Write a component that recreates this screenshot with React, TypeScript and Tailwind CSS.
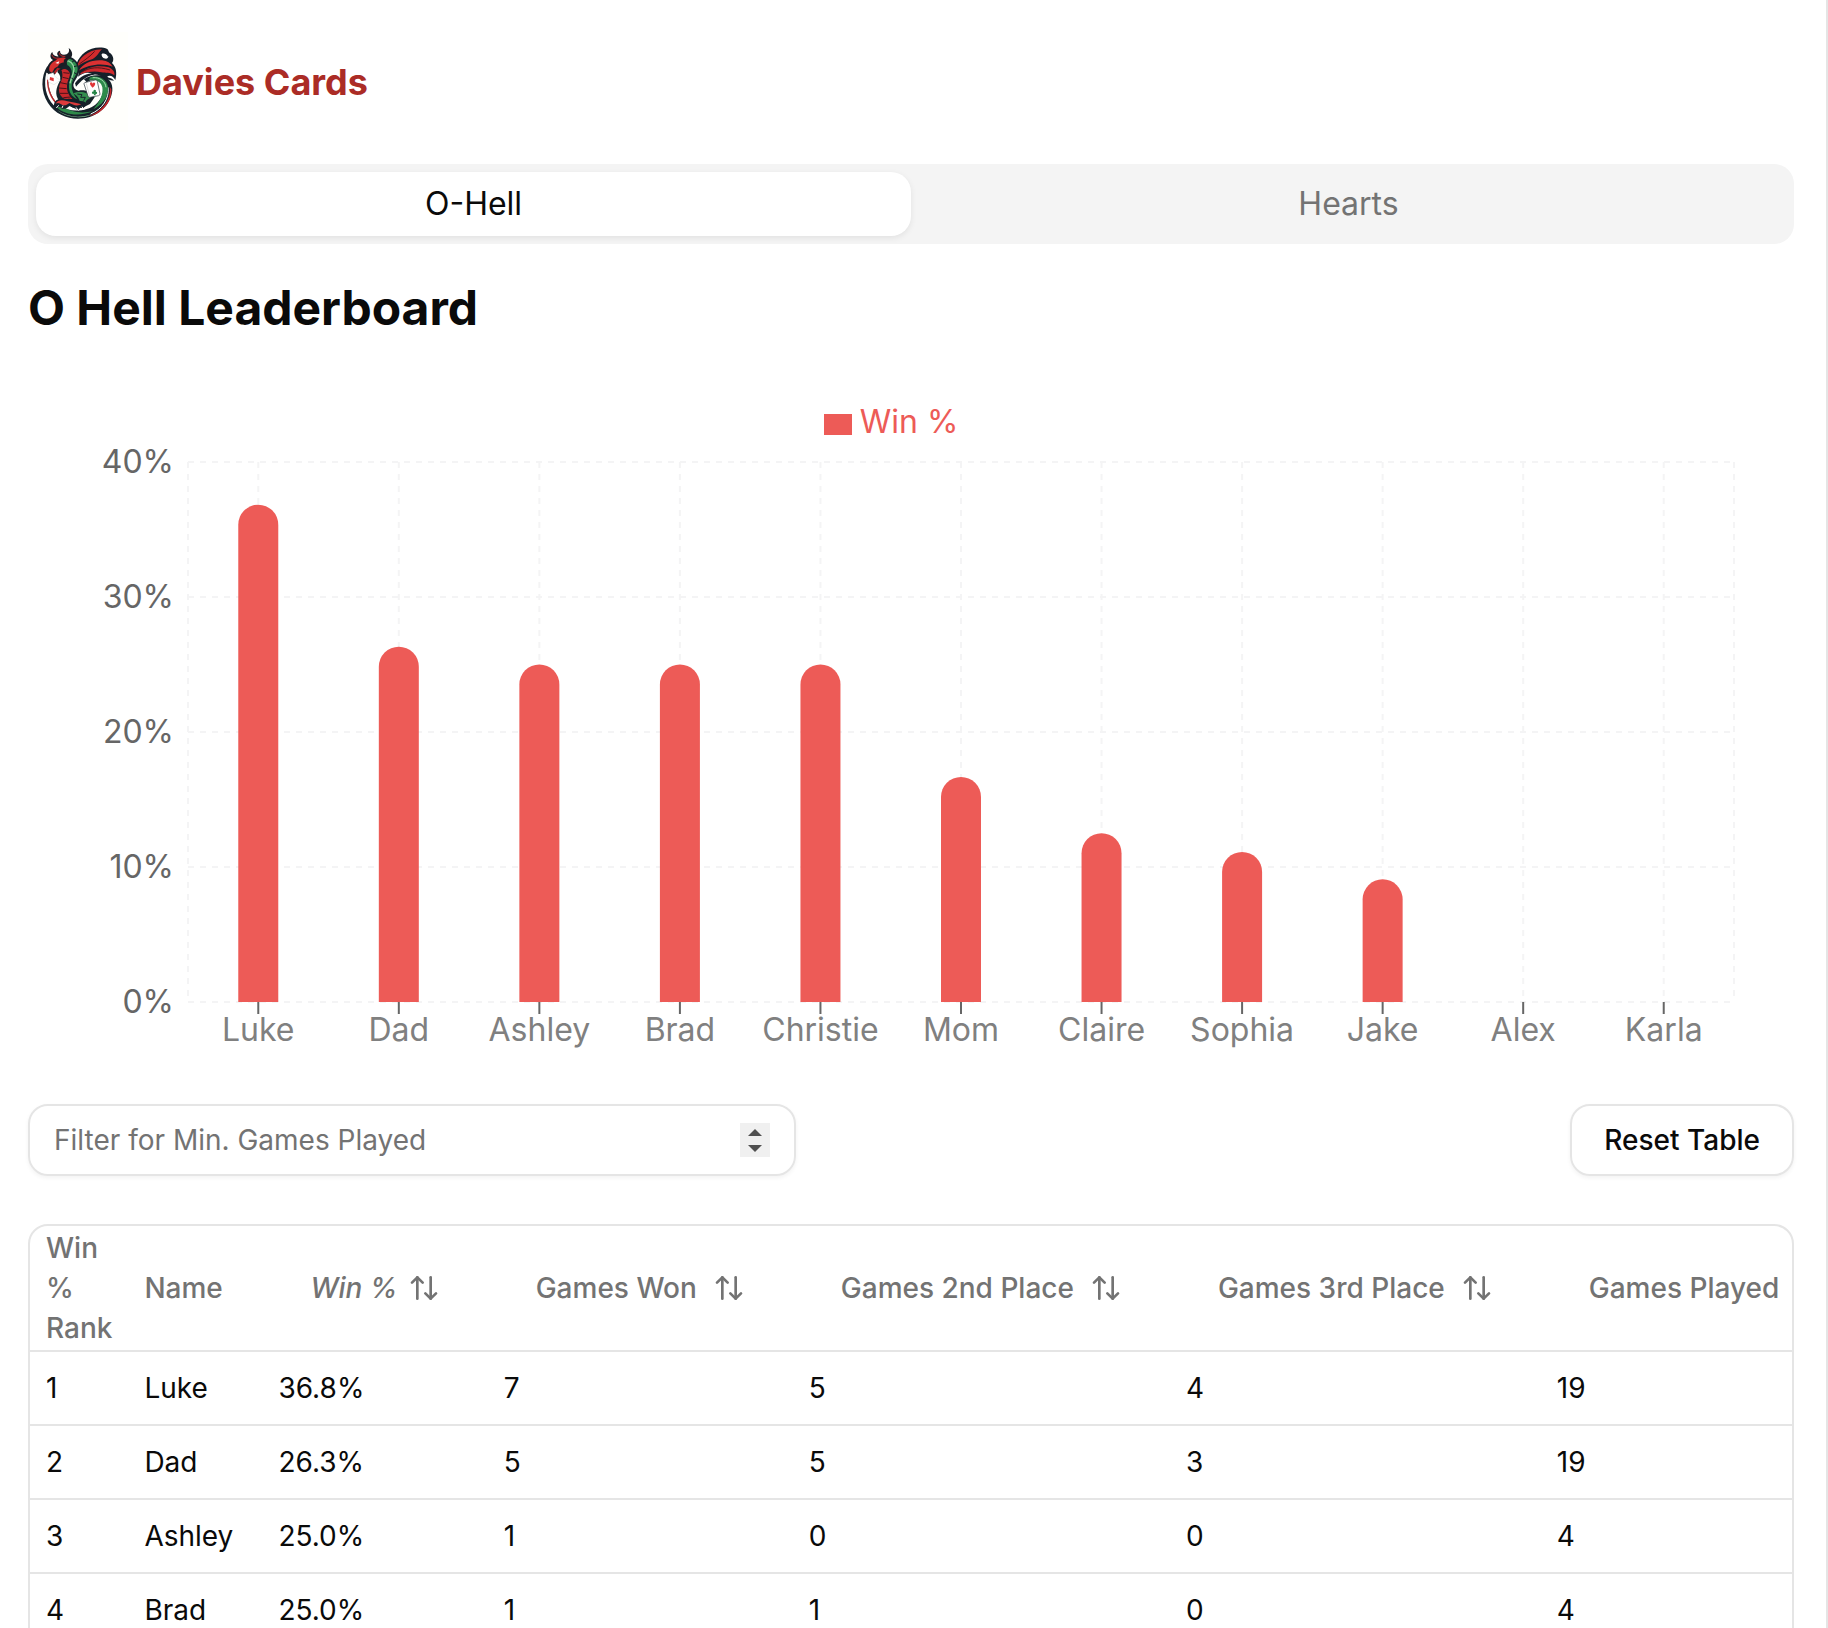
import { useState } from "react";
import { ArrowUpDown } from "lucide-react";

const chartData = [
  { name: "Luke", value: 36.84 },
  { name: "Dad", value: 26.32 },
  { name: "Ashley", value: 25 },
  { name: "Brad", value: 25 },
  { name: "Christie", value: 25 },
  { name: "Mom", value: 16.67 },
  { name: "Claire", value: 12.5 },
  { name: "Sophia", value: 11.11 },
  { name: "Jake", value: 9.09 },
  { name: "Alex", value: 0 },
  { name: "Karla", value: 0 },
];

const rows = [
  ["1", "Luke", "36.8%", "7", "5", "4", "19"],
  ["2", "Dad", "26.3%", "5", "5", "3", "19"],
  ["3", "Ashley", "25.0%", "1", "0", "0", "4"],
  ["4", "Brad", "25.0%", "1", "1", "0", "4"],
];

const sortable = ["Win %", "Games Won", "Games 2nd Place", "Games 3rd Place", "Games Played"];

function DragonLogo() {
  return (
    <svg viewBox="24 6 300 300" className="size-[100px] shrink-0" role="img" aria-label="Davies Cards dragon">
      <rect x="24" y="6" width="300" height="300" fill="#fffffc" />
      {/* tail ring */}
      <path d="M82 108C62 140 62 185 84 219C108 256 150 271 192 265C240 257 272 222 277 182C279 160 268 143 246 137C228 133 206 137 192 148L200 157C216 147 238 148 246 162C256 182 246 208 226 224C200 244 150 250 118 226C90 203 78 160 90 124Z" fill="#16222a" />
      <path d="M79 128C70 165 78 200 101 226L109 221C88 198 81 165 86 130Z" fill="#fff" />
      <path d="M84 148C85 183 98 209 120 227L113 226C92 208 80 178 81 150Z" fill="#b9292b" />
      <path d="M108 230C134 256 180 260 220 243C188 251 152 248 128 229Z" fill="#2f8a4a" />
      <path d="M112 240C142 262 180 266 216 252C190 268 140 264 112 240Z" fill="#8ccb98" />
      <path d="M269 170C274 204 252 241 206 258C240 258 278 216 274 178Z" fill="#c4262b" />
      <path d="M264 172C269 206 246 238 212 252" stroke="#fff" strokeWidth="3" fill="none" />
      <path d="M212 141C240 134 268 152 264 182C262 204 246 224 220 238C240 214 250 194 247 172C244 156 230 148 206 149Z" fill="#2e8b4b" />
      <path d="M218 143C240 141 256 154 258 172" stroke="#a6dbb0" strokeWidth="3" fill="none" />
      {/* wing */}
      <path d="M162 148C162 112 172 84 195 67C212 54 240 48 262 57C268 64 270 74 264 80C260 72 252 69 245 72C244 80 250 86 258 86C266 86 268 76 262 64C280 72 284 90 276 99C288 110 292 128 286 150C282 142 272 134 262 139C264 146 274 142 282 152C254 152 244 132 222 134C198 137 184 152 168 170Z" fill="#16202a" />
      <path d="M172 110C176 86 200 60 246 58C236 66 234 78 218 87C200 93 184 100 172 110Z" fill="#d02b2d" />
      <path d="M178 102C194 90 210 80 224 64" stroke="#5b1219" strokeWidth="3" fill="none" />
      <path d="M176 122C190 100 212 89 246 91C262 93 272 99 278 110C250 98 206 102 176 122Z" fill="#dc3132" />
      <path d="M178 134C198 110 234 104 266 112C280 118 285 128 283 136C270 126 256 130 244 127C222 122 200 126 178 134Z" fill="#cf292c" />
      <path d="M186 126C208 112 234 109 270 120" stroke="#55141a" strokeWidth="3" fill="none" />
      <path d="M168 112C172 124 167 140 158 158L165 160C176 146 190 132 216 130C198 124 184 132 174 140C178 128 176 118 174 108Z" fill="#fff" />
      {/* neck and body */}
      <path d="M122 80C152 72 178 92 178 120C177 139 163 150 160 164C160 174 166 180 176 182C196 178 214 186 224 202L210 222L186 234L150 226L118 214C102 192 110 172 118 156C124 142 120 134 112 126Z" fill="#16242a" />
      <path d="M128 88C150 78 174 96 173 118C171 136 157 146 155 164C154 184 164 196 172 208C154 200 146 186 147 166C149 148 158 138 155 122C151 108 142 102 124 104Z" fill="#2f904f" />
      <path d="M134 92C150 90 162 102 162 118C161 134 152 146 150 160" stroke="#9bd6a5" strokeWidth="4" fill="none" />
      <path d="M156 96L165 91M162 110L173 107M162 128L170 132M154 144L162 149" stroke="#16242a" strokeWidth="3" />
      <path d="M124 120C134 112 148 120 150 132C148 146 142 152 141 168C140 186 148 198 158 208L134 208C114 196 114 174 121 160C127 148 130 132 124 120Z" fill="#c9282c" />
      <path d="M130 128L148 130M128 142L146 146M121 158L141 162M117 174L140 176M120 190L144 190M130 203L152 201" stroke="#4d1118" strokeWidth="3" />
      <path d="M160 190C176 183 204 184 214 202C208 206 200 208 196 218C190 228 178 222 178 210C174 200 168 196 160 190Z" fill="#338d4e" />
      <path d="M172 192L186 194L182 202L196 202L191 212" stroke="#16242a" strokeWidth="3" fill="none" />
      {/* head */}
      <path d="M84 132C76 116 84 100 99 90C88 84 90 72 97 66C98 76 106 80 116 79C108 72 112 64 120 62C120 70 124 74 132 74C144 74 150 66 146 54C160 64 160 82 146 88C142 92 138 98 142 104L128 108L120 114L128 120L112 120L102 136Z" fill="#1a1e26" />
      <path d="M89 124C84 110 94 98 106 92C114 84 128 80 138 84C132 88 130 92 132 97C124 98 116 102 114 109L104 115L96 128Z" fill="#d6302f" />
      <path d="M96 74C98 84 108 86 118 84M118 68C118 76 126 80 136 79" stroke="#c9282c" strokeWidth="3" fill="none" />
      <path d="M106 99L118 94L115 101Z" fill="#fff" />
      <path d="M102 126L112 113L122 116L114 121L106 132Z" fill="#b32027" />
      {/* feet */}
      <path d="M102 224C104 208 120 202 142 207C158 204 176 214 190 214C200 216 200 228 190 234C182 228 178 236 174 242C168 234 156 234 148 228C142 234 136 238 126 236C120 228 112 230 108 238C104 234 102 228 102 224Z" fill="#15202a" />
      <path d="M107 221C112 209 128 208 142 214L166 218L184 223C170 230 158 224 148 219C138 227 130 228 122 222C116 218 112 218 107 221Z" fill="#dd3b3c" />
      <path d="M109 234L116 226M126 234L129 227M152 230L160 240M168 232L175 242M186 230L192 240" stroke="#fff" strokeWidth="3" />
      {/* cards */}
      <path d="M80 134L100 128C104 142 112 146 122 150L102 164L86 156Z" fill="#fff" stroke="#c9cdc9" strokeWidth="1" />
      <path d="M90 141L101 144L101 154L89 150Z" fill="#df3336" />
      <path d="M194 158L226 150Q231 149 232 154L240 192Q240 196 236 197L210 202Q205 203 204 198L192 162Q192 159 194 158Z" fill="#fff" stroke="#26323a" strokeWidth="2" />
      <path d="M199 160L209 199" stroke="#c7cbc7" strokeWidth="2" />
      <path d="M218 173C209 166 208 158 213 157Q217 157 218 161Q220 156 224 158C228 161 224 168 218 173Z" fill="#e03538" />
      <path d="M224 179C228 179 229 183 227 185C232 184 233 190 229 192C226 193 225 191 225 190L228 196H221L223 190C222 193 217 193 216 190C215 186 218 184 221 185C219 182 221 179 224 179Z" fill="#248547" />
    </svg>
  );
}

function WinChart() {
  const band = 100 / chartData.length;
  return (
    <section aria-label="Win percentage by player" className="mt-[66px] pr-[60px] pl-14 text-[32px] leading-10">
      <div className="flex h-10 items-center justify-center gap-2 pr-9 text-[#ed5b57]">
        <span className="mt-1 h-[21px] w-7 bg-[#ed5b57]" />
        <span>Win %</span>
      </div>
      <div className="mt-5 flex">
        <div className="-my-5 flex h-[580px] w-[104px] shrink-0 flex-col justify-between pr-3.5 text-right text-[#666]">
          {["40%", "30%", "20%", "10%", "0%"].map((t) => (
            <span key={t}>{t}</span>
          ))}
        </div>
        <div className="min-w-0 flex-1">
          <svg className="block h-[540px] w-full overflow-visible" aria-hidden="true">
            <g stroke="#f4f4f5" strokeWidth="2" strokeDasharray="6 6">
              {[0, 135, 270, 405, 540].map((y) => (
                <line key={y} x1="0" x2="100%" y1={y} y2={y} />
              ))}
              <line x1="0" x2="0" y1="0" y2="540" />
              {chartData.map((d, i) => (
                <line key={d.name} x1={`${(i + 0.5) * band}%`} x2={`${(i + 0.5) * band}%`} y1="0" y2="540" />
              ))}
              <line x1="100%" x2="100%" y1="0" y2="540" />
            </g>
            <g stroke="#666" strokeWidth="2">
              {chartData.map((d, i) => (
                <line key={d.name} x1={`${(i + 0.5) * band}%`} x2={`${(i + 0.5) * band}%`} y1="540" y2="552" />
              ))}
            </g>
            <svg width="100%" height="540" overflow="hidden">
              <g transform="translate(-20 0)" fill="#ed5b57">
                {chartData
                  .filter((d) => d.value > 0)
                  .map((d, i) => (
                    <rect
                      key={d.name}
                      x={`${(i + 0.5) * band}%`}
                      y={540 - d.value * 13.5}
                      width="40"
                      height={d.value * 13.5 + 30}
                      rx="20"
                    />
                  ))}
              </g>
            </svg>
          </svg>
          <div className="grid grid-cols-11 pt-2 text-center text-[#808080]">
            {chartData.map((d) => (
              <span key={d.name}>{d.name}</span>
            ))}
          </div>
        </div>
      </div>
    </section>
  );
}

export default function App() {
  const [tab, setTab] = useState("O-Hell");
  const [min, setMin] = useState("");
  const step = (n: number) => setMin(String(Math.max(0, Number(min) + n)));
  return (
    <main className="min-h-screen border-r-2 border-[#e5e5e5] bg-white pt-8 pr-8 pl-7 font-['Inter',sans-serif] text-[28px] leading-10 text-[#0a0a0a]">
      <header className="flex h-[100px] items-center gap-2">
        <DragonLogo />
        <span className="text-[36px] font-bold text-[#ab2c26]">Davies Cards</span>
      </header>

      <div role="tablist" className="mt-8 grid h-20 grid-cols-2 rounded-[20px] bg-[#f4f4f4] p-2 text-[32px]">
        {["O-Hell", "Hearts"].map((t) => (
          <button
            key={t}
            type="button"
            role="tab"
            aria-selected={tab === t}
            onClick={() => setTab(t)}
            className={
              tab === t
                ? "rounded-[20px] bg-white shadow-[0_2px_6px_rgba(0,0,0,0.08)]"
                : "rounded-[20px] text-[#737373]"
            }
          >
            {t}
          </button>
        ))}
      </div>

      <h1 className="mt-9 text-[48px] leading-14 font-bold">O Hell Leaderboard</h1>

      <WinChart />

      <div className="mt-[54px] flex items-center justify-between">
        <div className="flex h-[72px] w-[768px] items-center rounded-[20px] border-2 border-[#e5e5e5] px-6 shadow-[0_2px_4px_rgba(0,0,0,0.05)]">
          <input
            type="text"
            inputMode="numeric"
            aria-label="Filter for Min. Games Played"
            placeholder="Filter for Min. Games Played"
            value={min}
            onChange={(e) => setMin(e.target.value)}
            className="min-w-0 flex-1 outline-none placeholder:text-[#737373]"
          />
          <div className="flex h-[34px] w-[30px] flex-col bg-[#f0f0f0] text-[#505050]">
            <button type="button" aria-label="Increase" onClick={() => step(1)} className="flex flex-1 items-end justify-center pb-1">
              <svg viewBox="0 0 14 7" className="h-[7px] w-[14px]" fill="currentColor"><path d="M0 7L7 0L14 7Z" /></svg>
            </button>
            <button type="button" aria-label="Decrease" onClick={() => step(-1)} className="flex flex-1 items-start justify-center pt-[5px]">
              <svg viewBox="0 0 14 7" className="h-[7px] w-[14px]" fill="currentColor"><path d="M0 0L7 7L14 0Z" /></svg>
            </button>
          </div>
        </div>
        <button
          type="button"
          onClick={() => setMin("")}
          className="h-[72px] rounded-[20px] border-2 border-[#e5e5e5] px-8 font-medium shadow-[0_2px_4px_rgba(0,0,0,0.05)]"
        >
          Reset Table
        </button>
      </div>

      <div className="mt-12 overflow-hidden rounded-[20px] border-2 border-[#e5e5e5]">
        <table className="w-full text-left">
          <thead>
            <tr className="h-[125px] border-b-2 border-[#e5e5e5] text-[#737373]">
              <th className="w-[98px] px-4 font-medium">Win % Rank</th>
              <th className="min-w-[134px] px-4 font-medium">Name</th>
              {sortable.map((h, i) => (
                <th key={h} className="px-4 font-medium">
                  <button
                    type="button"
                    className={
                      i === 0
                        ? "flex items-center gap-2.5 px-8 whitespace-nowrap italic"
                        : "flex items-center gap-4 px-8 whitespace-nowrap"
                    }
                  >
                    {h}
                    <ArrowUpDown className="size-8 shrink-0" strokeWidth={2} />
                  </button>
                </th>
              ))}
            </tr>
          </thead>
          <tbody>
            {rows.map((r) => (
              <tr key={r[0]} className="border-b-2 border-[#e5e5e5] last:border-b-0">
                {r.map((c, i) => (
                  <td key={i} className="p-4">{c}</td>
                ))}
              </tr>
            ))}
          </tbody>
        </table>
      </div>
    </main>
  );
}
